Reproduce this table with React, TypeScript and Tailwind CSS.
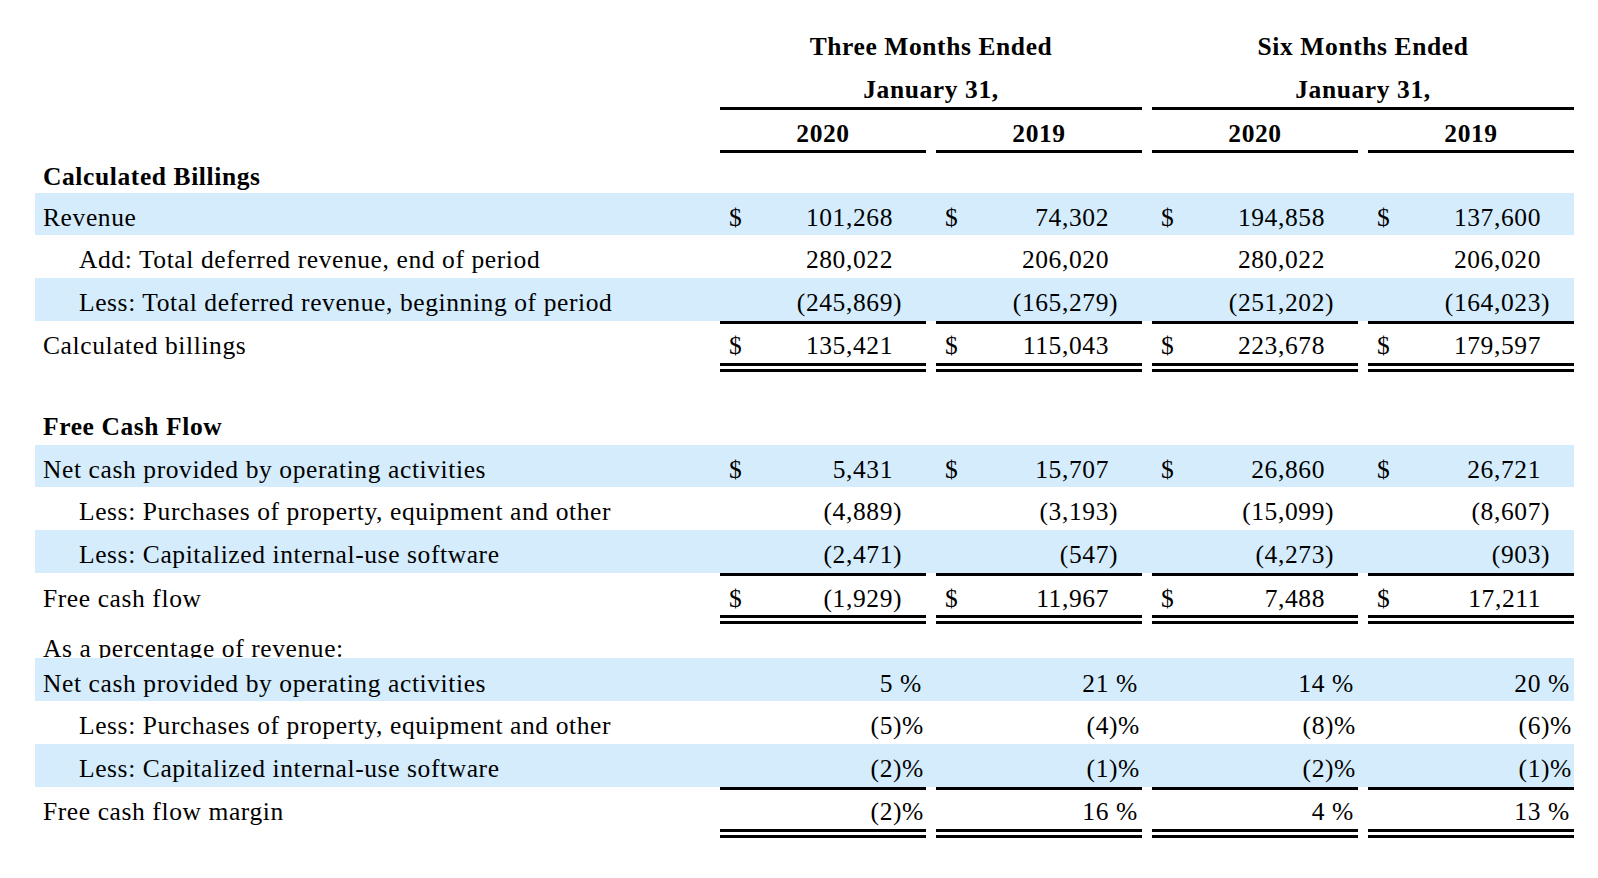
import React from "react";

type Line = {
  label: string;
  values: string[];
  indent?: boolean;
  band?: boolean;
  dollar?: boolean;
  pct?: boolean;
  h: string;
  pt: string;
};

const billings: Line[] = [
  { label: "Revenue", values: ["101,268", "74,302", "194,858", "137,600"], band: true, dollar: true, h: "h-[42px]", pt: "pt-[8px]" },
  { label: "Add: Total deferred revenue, end of period", values: ["280,022", "206,020", "280,022", "206,020"], indent: true, h: "h-[43px]", pt: "pt-[8px]" },
  { label: "Less: Total deferred revenue, beginning of period", values: ["(245,869)", "(165,279)", "(251,202)", "(164,023)"], indent: true, band: true, h: "h-[43px]", pt: "pt-[8px]" },
];

const billingsTotal: Line = { label: "Calculated billings", values: ["135,421", "115,043", "223,678", "179,597"], dollar: true, h: "h-[39px]", pt: "pt-[5px]" };

const cashFlow: Line[] = [
  { label: "Net cash provided by operating activities", values: ["5,431", "15,707", "26,860", "26,721"], band: true, dollar: true, h: "h-[42px]", pt: "pt-[8px]" },
  { label: "Less: Purchases of property, equipment and other", values: ["(4,889)", "(3,193)", "(15,099)", "(8,607)"], indent: true, h: "h-[43px]", pt: "pt-[8px]" },
  { label: "Less: Capitalized internal-use software", values: ["(2,471)", "(547)", "(4,273)", "(903)"], indent: true, band: true, h: "h-[43px]", pt: "pt-[8px]" },
];

const cashFlowTotal: Line = { label: "Free cash flow", values: ["(1,929)", "11,967", "7,488", "17,211"], dollar: true, h: "h-[39px]", pt: "pt-[6px]" };

const percents: Line[] = [
  { label: "Net cash provided by operating activities", values: ["5", "21", "14", "20"], band: true, pct: true, h: "h-[43px]", pt: "pt-[9px]" },
  { label: "Less: Purchases of property, equipment and other", values: ["(5)", "(4)", "(8)", "(6)"], indent: true, pct: true, h: "h-[43px]", pt: "pt-[8px]" },
  { label: "Less: Capitalized internal-use software", values: ["(2)", "(1)", "(2)", "(1)"], indent: true, band: true, pct: true, h: "h-[43px]", pt: "pt-[8px]" },
];

const marginTotal: Line = { label: "Free cash flow margin", values: ["(2)", "16", "4", "13"], pct: true, h: "h-[39px]", pt: "pt-[5px]" };

function Cell({ value, dollar, pct }: { value: string; dollar?: boolean; pct?: boolean }) {
  const neg = value.startsWith("(");
  const num = neg ? value.slice(0, -1) : value;
  let suffix = neg ? ")" : "";
  if (pct) suffix += neg ? "%" : "\u00a0%";

  return (
    <div className="flex w-[206px]">
      <span className="w-[40px] pl-[9px]">{dollar ? "$" : ""}</span>
      <span className="flex-1 text-right">{num}</span>
      <span className="w-[33px] whitespace-nowrap">{suffix}</span>
    </div>
  );
}

function Row({ line }: { line: Line }) {
  return (
    <div className={`flex ${line.h} ${line.pt} ${line.band ? "bg-[#d4ecfc]" : ""}`}>
      <div className={`w-[685px] ${line.indent ? "pl-[44px]" : "pl-[8px]"}`}>{line.label}</div>
      <div className="flex gap-[10px]">
        {line.values.map((v, i) => (
          <Cell key={i} value={v} dollar={line.dollar} pct={line.pct} />
        ))}
      </div>
    </div>
  );
}

function Rule({ double }: { double?: boolean }) {
  return (
    <div className="flex">
      <div className="w-[685px]" />
      <div className="flex gap-[10px]">
        {[0, 1, 2, 3].map((i) => (
          <div
            key={i}
            className={double ? "h-[9px] w-[206px] border-y-[3px] border-black" : "h-[3px] w-[206px] bg-black"}
          />
        ))}
      </div>
    </div>
  );
}

function Heading({ text, h, pt, clip }: { text: string; h: string; pt: string; clip?: boolean }) {
  return (
    <div className={`${h} ${pt} pl-[8px] ${clip ? "overflow-hidden" : ""}`}>
      <span className={clip ? "" : "font-bold"}>{text}</span>
    </div>
  );
}

export default function App() {
  return (
    <div className="min-h-screen bg-white font-['Liberation_Serif','Times_New_Roman',serif] text-[25.5px] leading-[34px] tracking-[0.6px] text-black">
      <div className="ml-[35px] w-[1539px]">
        {/* column headings */}
        <div className="flex h-[64px] pt-[30px] font-bold">
          <div className="w-[685px]" />
          <div className="flex gap-[10px]">
            <div className="w-[422px] text-center">Three Months Ended</div>
            <div className="w-[422px] text-center">Six Months Ended</div>
          </div>
        </div>
        <div className="flex h-[43px] pt-[9px] font-bold">
          <div className="w-[685px]" />
          <div className="flex gap-[10px]">
            <div className="w-[422px] text-center">January 31,</div>
            <div className="w-[422px] text-center">January 31,</div>
          </div>
        </div>
        <div className="flex">
          <div className="w-[685px]" />
          <div className="flex gap-[10px]">
            <div className="h-[3px] w-[422px] bg-black" />
            <div className="h-[3px] w-[422px] bg-black" />
          </div>
        </div>
        <div className="flex h-[40px] pt-[7px] font-bold">
          <div className="w-[685px]" />
          <div className="flex gap-[10px]">
            {["2020", "2019", "2020", "2019"].map((y, i) => (
              <div key={i} className="w-[206px] text-center">
                {y}
              </div>
            ))}
          </div>
        </div>
        <Rule />

        <Heading text="Calculated Billings" h="h-[40px]" pt="pt-[7px]" />
        {billings.map((l) => (
          <Row key={l.label} line={l} />
        ))}
        <Rule />
        <Row line={billingsTotal} />
        <Rule double />

        <Heading text="Free Cash Flow" h="h-[73px]" pt="pt-[38px]" />
        {cashFlow.map((l) => (
          <Row key={l.label} line={l} />
        ))}
        <Rule />
        <Row line={cashFlowTotal} />
        <Rule double />

        <Heading text="As a percentage of revenue:" h="h-[34px]" pt="pt-[8px]" clip />
        {percents.map((l) => (
          <Row key={l.label} line={l} />
        ))}
        <Rule />
        <Row line={marginTotal} />
        <Rule double />
      </div>
    </div>
  );
}
